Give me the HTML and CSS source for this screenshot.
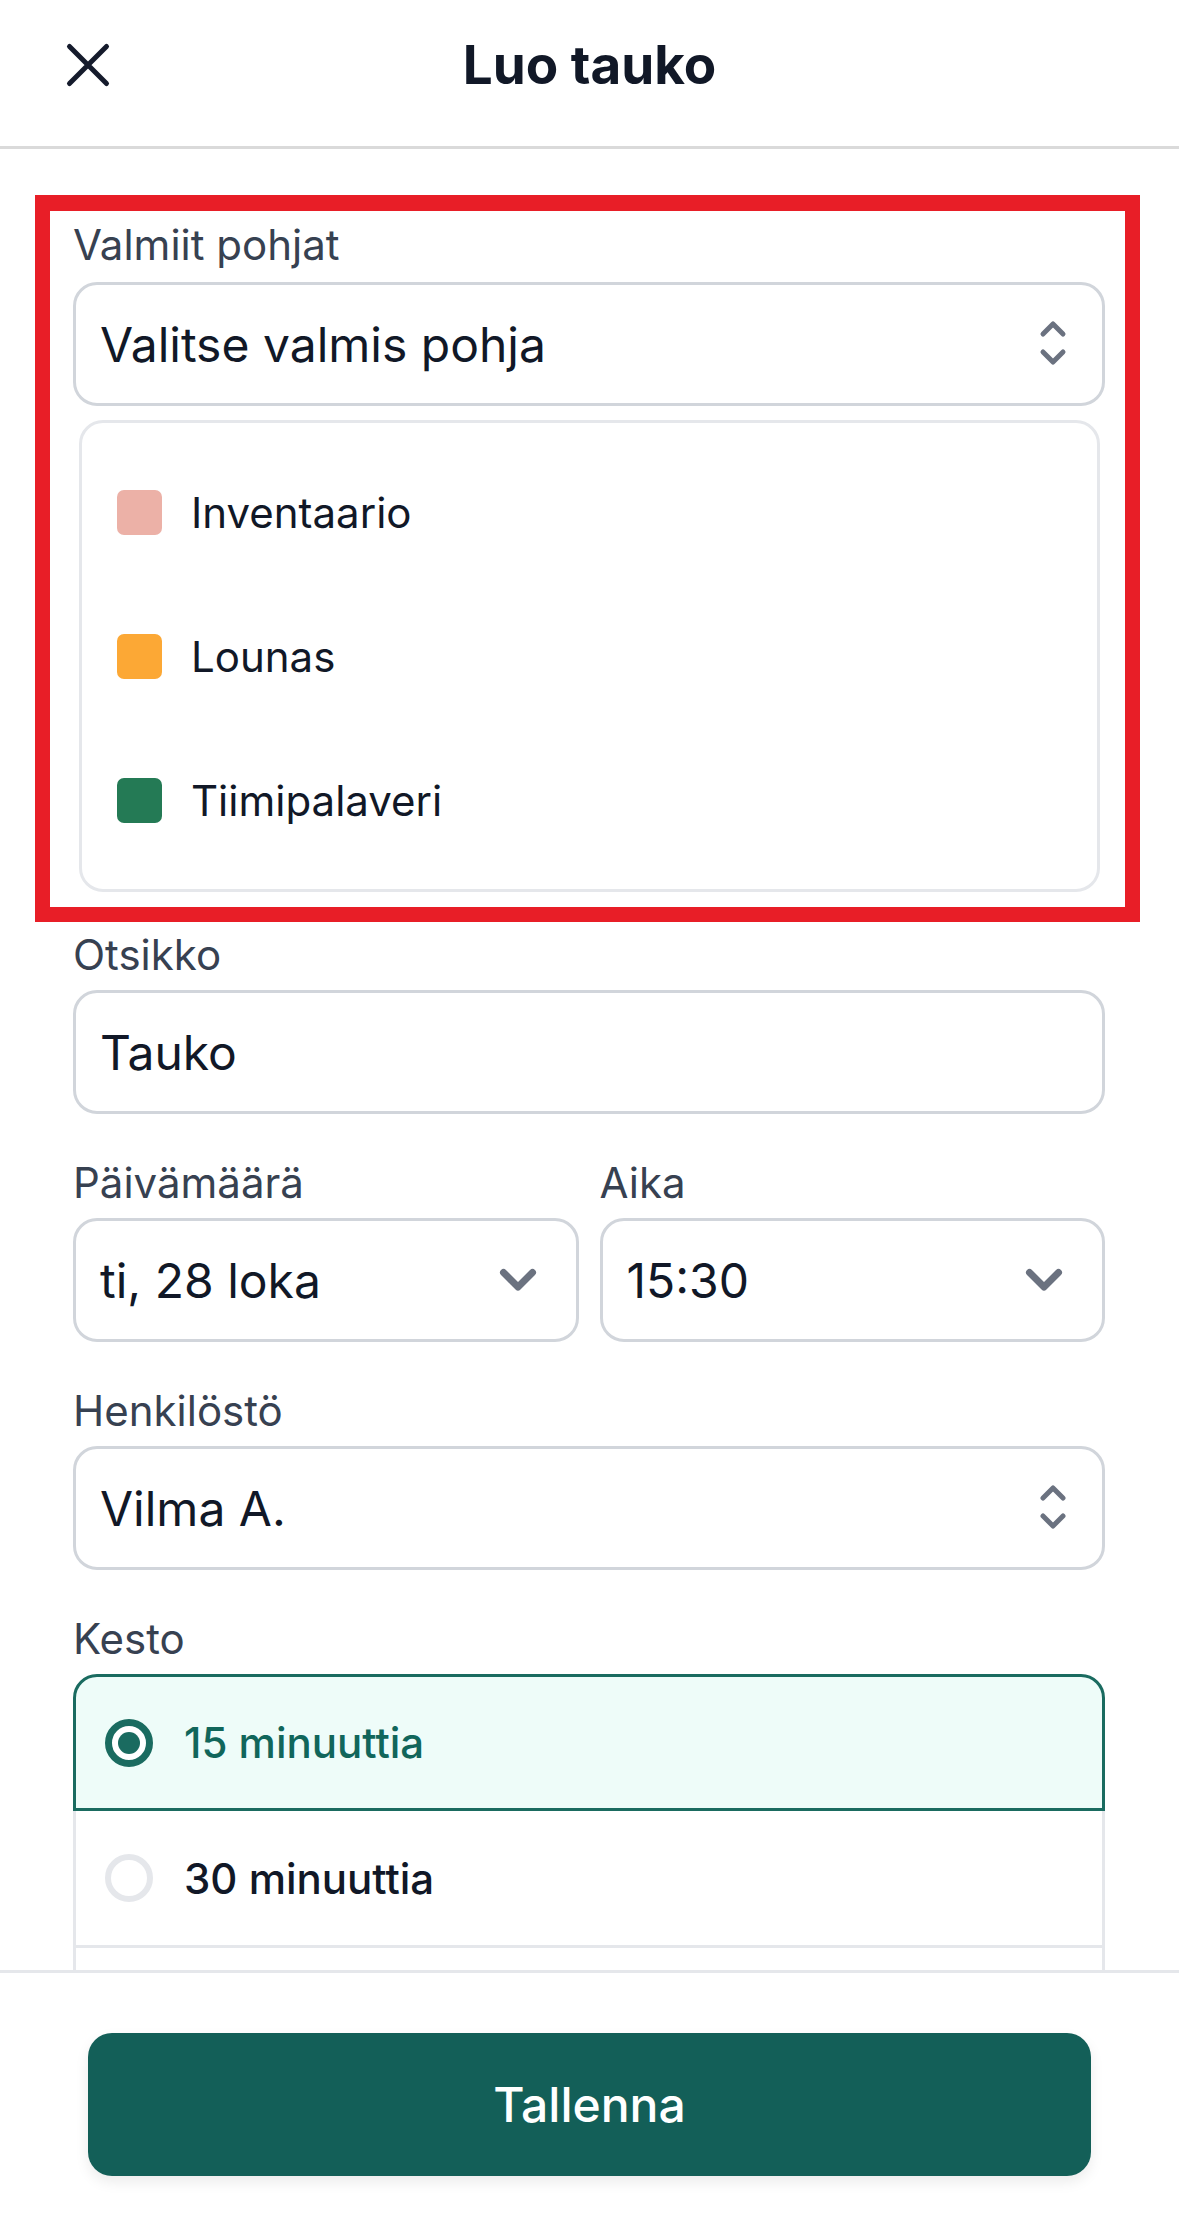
FILE: index.html
```html
<!DOCTYPE html>
<html lang="fi">
<head>
  <meta charset="UTF-8" />
  <meta name="viewport" content="width=device-width, initial-scale=1.0" />
  <title>Luo tauko</title>
  <link rel="stylesheet" href="styles.css">
</head>

<body>
  <div class="sheet">
    <header class="topbar">
      <button class="close" aria-label="Sulje">
        <svg width="48" height="48" viewBox="0 0 48 48">
          <path d="M5.5 5.5 L42.5 42.5 M42.5 5.5 L5.5 42.5" />
        </svg>
      </button>
      <h1>Luo tauko</h1>
      <span></span>
    </header>

    <main class="content">
      <section class="field template">
        <div class="label">Valmiit pohjat</div>
        <div class="box">
          <span class="value">Valitse valmis pohja</span>
          <svg class="updown" width="30" height="48" viewBox="0 0 30 48">
            <path d="M5 14 L15 4 L25 14 M5 32 L15 42 L25 32" />
          </svg>
        </div>
        <ul class="templates">
          <li><span class="swatch pink"></span>Inventaario</li>
          <li><span class="swatch orange"></span>Lounas</li>
          <li><span class="swatch green"></span>Tiimipalaveri</li>
        </ul>
        <div class="highlight"></div>
      </section>

      <div class="field">
        <div class="label">Otsikko</div>
        <div class="box">
          <span class="value">Tauko</span>
        </div>
      </div>

      <div class="field pair">
        <div>
          <div class="label">Päivämäärä</div>
          <div class="box">
            <span class="value">ti, 28 loka</span>
            <svg class="chevron" width="40" height="24" viewBox="0 0 40 24">
              <path d="M5.5 4.5 L20 19 L34.5 4.5" />
            </svg>
          </div>
        </div>
        <div>
          <div class="label">Aika</div>
          <div class="box">
            <span class="value">15:30</span>
            <svg class="chevron" width="40" height="24" viewBox="0 0 40 24">
              <path d="M5.5 4.5 L20 19 L34.5 4.5" />
            </svg>
          </div>
        </div>
      </div>

      <div class="field">
        <div class="label">Henkilöstö</div>
        <div class="box">
          <span class="value">Vilma A.</span>
          <svg class="updown" width="30" height="48" viewBox="0 0 30 48">
            <path d="M5 14 L15 4 L25 14 M5 32 L15 42 L25 32" />
          </svg>
        </div>
      </div>

      <div class="field">
        <div class="label">Kesto</div>
        <div class="durations">
          <div class="duration selected"><span class="radio"></span>15 minuuttia</div>
          <div class="duration"><span class="radio"></span>30 minuuttia</div>
          <div class="duration"></div>
        </div>
      </div>
    </main>

    <footer class="actions">
      <button class="save">Tallenna</button>
    </footer>
  </div>
</body>
</html>
```

FILE: styles.css
```css
:root {
  --text: #111827;
  --label: #374151;
  --muted: #6b7280;
  --line: #d1d5db;
  --soft: #e5e7eb;
  --teal: #1a6b60;
  --teal-dark: #135f58;
  --mint: #eefcf9;
}

* {
  box-sizing: border-box;
}

body {
  margin: 0;
  font-family: "Inter", "Noto Sans", sans-serif;
  background: #fff;
  color: var(--text);
}

.sheet {
  height: 100vh;
  display: flex;
  flex-direction: column;
  overflow: hidden;
}

.topbar {
  height: 149px;
  padding: 0 64px 16px;
  border-bottom: 3px solid #dadada;
  display: grid;
  grid-template-columns: 1fr auto 1fr;
  align-items: center;
}

.close {
  width: 48px;
  height: 48px;
  padding: 0;
  border: none;
  background: none;
}

.close path {
  fill: none;
  stroke: #151b2c;
  stroke-width: 5;
  stroke-linecap: round;
}

.topbar h1 {
  margin: 0;
  font-size: 53px;
  font-weight: 700;
  color: var(--text);
}

.content {
  flex: 1;
  overflow: hidden;
  padding: 66px 74px 0 73px;
}

.field {
  margin-bottom: 39px;
}

.label {
  font-size: 42px;
  line-height: 60px;
  color: var(--label);
  margin-bottom: 5px;
}

.box {
  height: 124px;
  border: 3px solid var(--line);
  border-radius: 24px;
  padding: 0 34px 0 24px;
  display: flex;
  align-items: center;
  justify-content: space-between;
  background: #fff;
}

.value {
  font-size: 48px;
  color: var(--text);
}

.updown path,
.chevron path {
  fill: none;
  stroke: var(--muted);
  stroke-linecap: round;
  stroke-linejoin: round;
}

.updown path {
  stroke-width: 5;
}

.chevron path {
  stroke-width: 7;
}

.chevron {
  margin-right: 4px;
}

/* valmiit pohjat */
.template {
  position: relative;
  margin-bottom: 33px;
}

.template .label {
  margin-bottom: 7px;
}

.templates {
  list-style: none;
  margin: 14px 5px 0 6px;
  padding: 17px 0;
  border: 3px solid var(--soft);
  border-radius: 24px;
}

.templates li {
  height: 144px;
  padding-left: 35px;
  display: flex;
  align-items: center;
  gap: 29px;
  font-size: 42px;
  color: var(--text);
}

.swatch {
  width: 45px;
  height: 45px;
  border-radius: 7px;
}

.pink { background: #ecb1a7; }
.orange { background: #fca835; }
.green { background: #247a55; }

.highlight {
  position: absolute;
  top: -20px;
  left: -38px;
  right: -35px;
  bottom: -30px;
  border: 15px solid #e81e27;
  border-top-width: 16px;
  pointer-events: none;
}

/* päivämäärä + aika */
.pair {
  display: grid;
  grid-template-columns: 1fr 1fr;
  gap: 21px;
}

/* kesto */
.duration {
  height: 137px;
  padding-left: 29px;
  display: flex;
  align-items: center;
  gap: 31px;
  font-size: 42px;
  font-weight: 500;
  color: var(--text);
  border: 3px solid var(--soft);
  border-top: none;
}

.duration.selected {
  border: 3px solid var(--teal);
  border-radius: 24px 24px 0 0;
  background: var(--mint);
  color: #11665b;
}

.radio {
  width: 48px;
  height: 48px;
  border-radius: 50%;
  border: 6px solid var(--soft);
  background: #fff;
  display: flex;
  align-items: center;
  justify-content: center;
}

.selected .radio {
  border: 7px solid var(--teal);
}

.selected .radio::after {
  content: "";
  width: 22px;
  height: 22px;
  border-radius: 50%;
  background: var(--teal);
}

.actions {
  border-top: 3px solid var(--soft);
  padding: 60px 88px 52px;
  background: #fff;
}

.save {
  width: 100%;
  height: 143px;
  border: none;
  border-radius: 24px;
  background: var(--teal-dark);
  color: #fff;
  font-family: inherit;
  font-size: 48px;
  font-weight: 500;
  box-shadow: 0 6px 14px rgba(0, 0, 0, 0.08);
}
```
